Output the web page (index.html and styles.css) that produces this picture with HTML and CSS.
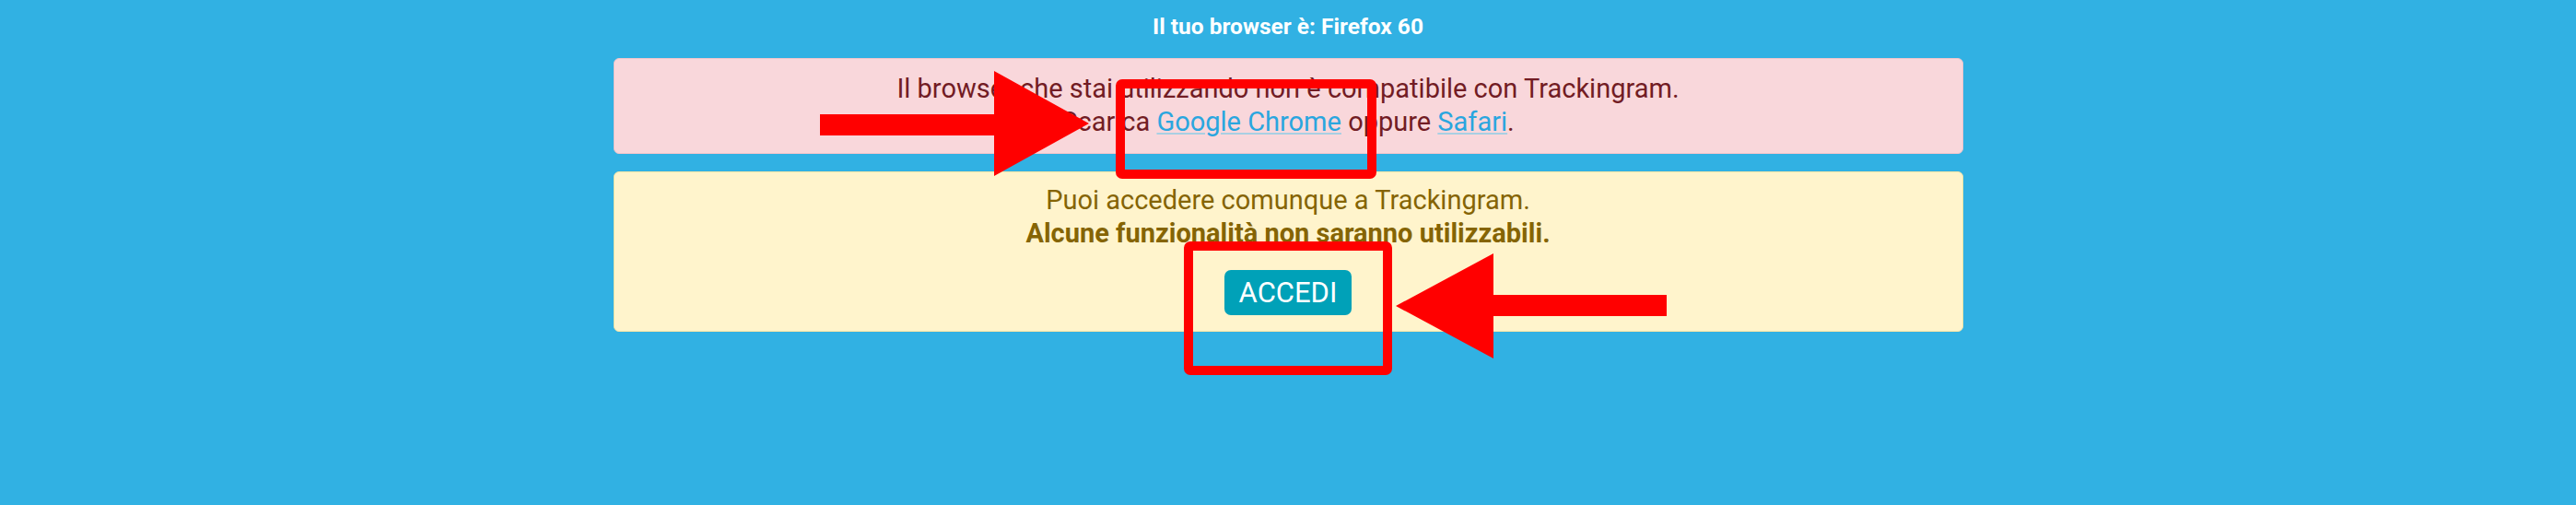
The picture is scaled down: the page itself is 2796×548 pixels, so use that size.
FILE: index.html
```html
<!DOCTYPE html>
<html lang="it">
<head>
  <meta charset="UTF-8">
  <meta name="viewport" content="width=device-width, initial-scale=1.0">
  <title>Browser non supportato - Trackingram</title>
  <link rel="stylesheet" href="styles.css">
</head>
<body>
  <div class="browser-info">Il tuo browser è: Firefox 60</div>

  <div class="alerts">
    <div class="alert alert-danger">
      Il browser che stai utilizzando non è compatibile con Trackingram.<br>
      Scarica <a href="#">Google Chrome</a> oppure <a href="#">Safari</a>.
    </div>
    <div class="alert alert-warning">
      <p>Puoi accedere comunque a Trackingram.<br>
      <strong>Alcune funzionalità non saranno utilizzabili.</strong></p>
      <button class="btn-login">ACCEDI</button>
    </div>
  </div>

  <!-- annotations drawn over the screenshot -->
  <svg class="marks" width="2796" height="548" viewBox="0 0 2796 548">
    <polygon points="890,124 1079,124 1079,77 1182,134 1079,191 1079,147 890,147" fill="#ff0000"/>
    <rect x="1216" y="91" width="273" height="98" rx="2" fill="none" stroke="#ff0000" stroke-width="10"/>
    <rect x="1290" y="267" width="216" height="135" rx="2" fill="none" stroke="#ff0000" stroke-width="10"/>
    <polygon points="1809,320 1621,320 1621,275 1515,332 1621,389 1621,343 1809,343" fill="#ff0000"/>
  </svg>
</body>
</html>
```

FILE: styles.css
```css
html, body {
  margin: 0;
  height: 100%;
}
body {
  position: relative;
  background-color: #31b1e3;
  font-family: Roboto, 'Liberation Sans', sans-serif;
  overflow: hidden;
}
.browser-info {
  padding-top: 14px;
  color: #fff;
  font-size: 24.5px;
  font-weight: bold;
  line-height: 30px;
  text-align: center;
}
.alerts {
  width: 1465px;
  margin: 19px auto 0;
}
.alert {
  border: 1px solid;
  border-radius: 6px;
  padding: 14px 30px 16px;
  font-size: 29px;
  line-height: 36px;
  text-align: center;
}
.alert + .alert {
  margin-top: 19px;
}
.alert-danger {
  background-color: #f9d7db;
  border-color: #f3c5cb;
  color: #721c24;
}
.alert-danger a {
  color: #2aa6df;
  text-decoration: underline;
  text-decoration-color: #a9cfe3;
}
.alert-warning {
  padding-top: 12px;
  padding-bottom: 17px;
  background-color: #fff4cc;
  border-color: #fbe7a8;
  color: #856404;
}
.alert-warning p {
  margin: 0;
}
.btn-login {
  margin-top: 22px;
  padding: 6px 16px;
  background-color: #00a1b8;
  border: none;
  border-radius: 7px;
  color: #fff;
  font-family: inherit;
  font-size: 31px;
  line-height: 37px;
  cursor: pointer;
}
.marks {
  position: absolute;
  top: 0;
  left: 0;
}
```
